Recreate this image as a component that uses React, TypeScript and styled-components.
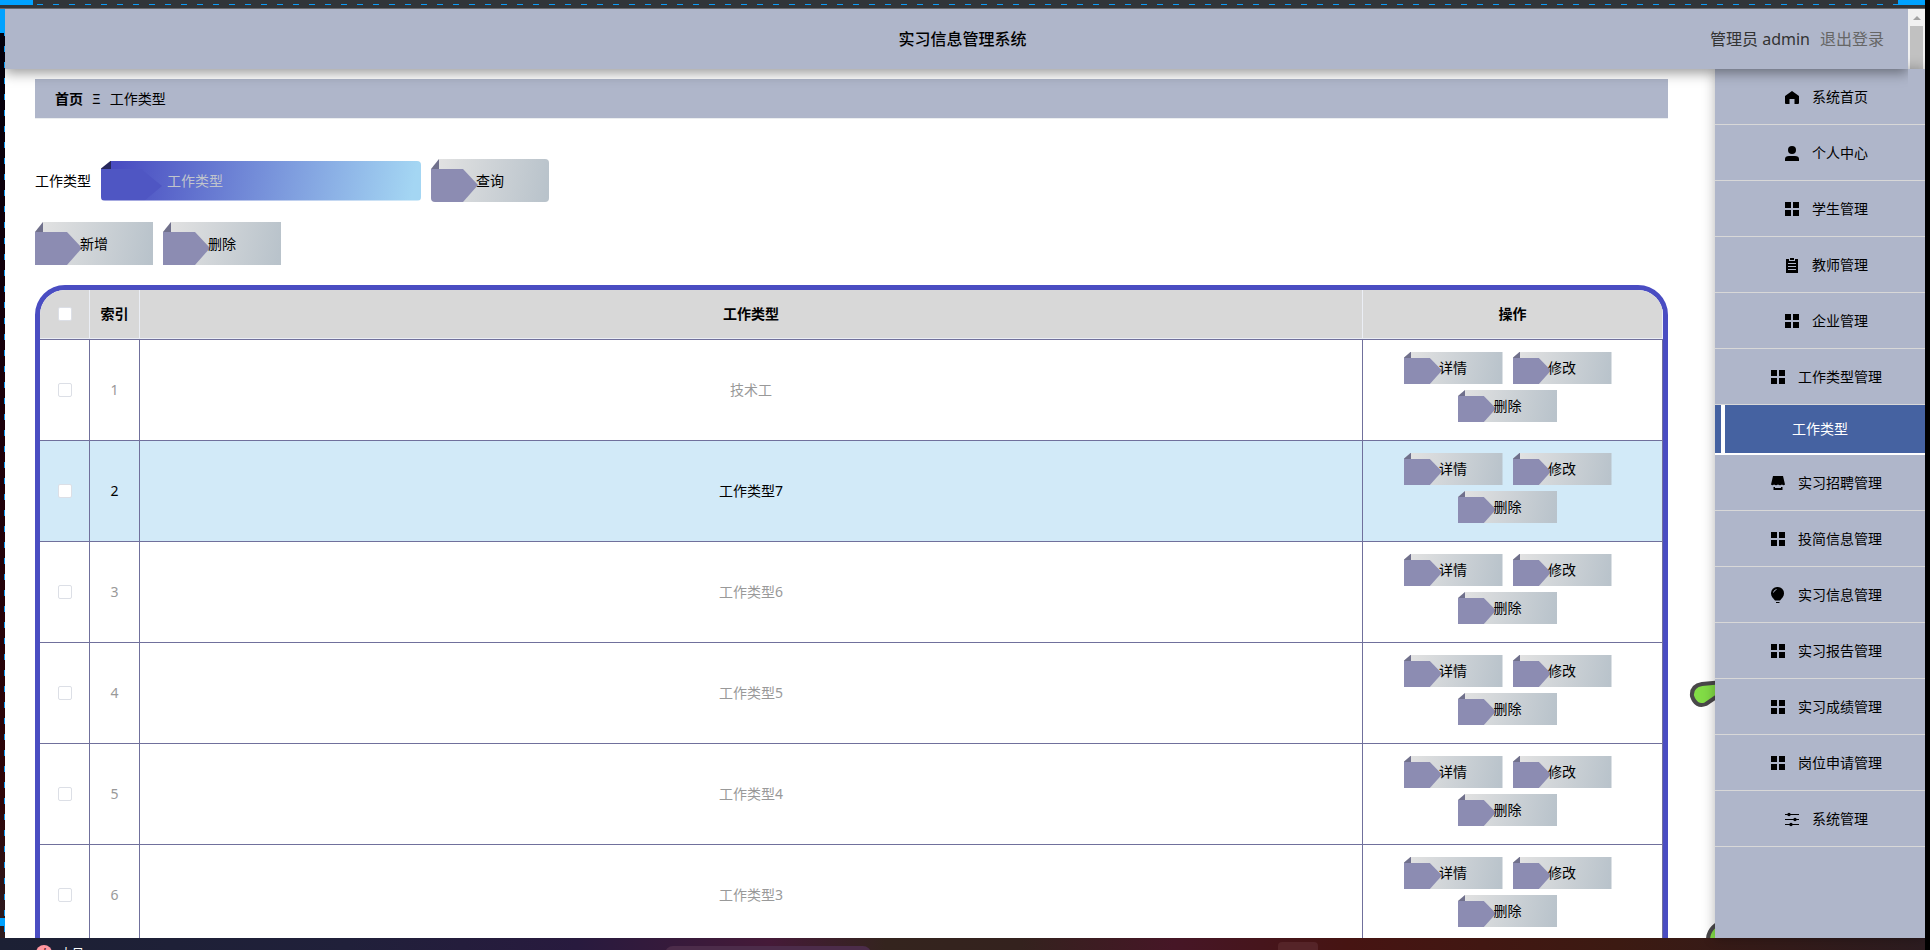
import React from "react";
import styled, { createGlobalStyle } from "styled-components";

const GlobalStyle = createGlobalStyle`
  * { box-sizing: border-box; }
  html, body, #root { height: 100%; }
  body {
    margin: 0;
    overflow: hidden;
    background: #000;
    color: #000;
    font: 14px/20px "Noto Sans", "Noto Sans CJK SC", sans-serif;
  }
  button, input { font: inherit; }
`;

const Desktop = styled.div`
  height: 100vh;
  display: grid;
  grid-template-columns: 5px minmax(0, 1fr) 5px;
  grid-template-rows: 9px minmax(0, 1fr) 12px;
`;

const TopEdge = styled.div`
  grid-column: 1 / 3;
  display: flex;
  justify-content: space-between;
  border-bottom: 1px solid #66676b;
  background:
    repeating-linear-gradient(90deg, transparent 0 5px, #0c9bf5 5px 11px, transparent 11px 16px) 0 4px / 100% 1px no-repeat,
    #313539;
`;

const Corner = styled.i<{ $width: number; $height: number }>`
  width: ${(p) => p.$width}px;
  height: ${(p) => p.$height}px;
  background: #00a2ff;
`;

const RightEdge = styled.div`
  grid-column: 3;
  grid-row: 1 / 4;
  background: #000;
`;

const LeftEdge = styled.div`
  grid-column: 1;
  grid-row: 2;
  display: flex;
  flex-direction: column;
  justify-content: space-between;
  padding-bottom: 12px;
  background:
    repeating-linear-gradient(180deg, transparent 0 5px, #0c9bf5 5px 11px, transparent 11px 16px) 4px 0 / 1px 100% no-repeat,
    linear-gradient(#00000c, #1c000a 45%, #2e0508 85%, #2c1c20);
`;

const Taskbar = styled.footer`
  grid-column: 1 / 3;
  grid-row: 3;
  display: flex;
  align-items: flex-start;
  overflow: hidden;
  background: linear-gradient(90deg, #1c2034, #20203a 18%, #281a3e 30%, #451a38 40%, #34241e 46%, #34221e 53%, #461626 61%, #461412 70%, #3c1a12 84%, #2c1c20);
`;

const Weather = styled.span`
  display: flex;
  gap: 8px;
  padding: 7px 0 0 36px;
  flex: 0 0 665px;
  color: #fff;
  font-size: 12px;
  line-height: 18px;
`;

const Alert = styled.i`
  width: 16px;
  height: 16px;
  border-radius: 50%;
  background: #ff96a0;
  color: #55202c;
  text-align: center;
  line-height: 16px;
`;

const SearchPill = styled.i`
  flex: 0 0 206px;
  height: 30px;
  margin-top: 8px;
  border-radius: 8px;
  background: #4c2c4a;
`;

const TaskButton = styled.i`
  flex: 0 0 40px;
  height: 30px;
  margin: 4px 0 0 407px;
  border-radius: 4px;
  background: #552428;
`;

const Screen = styled.div`
  grid-column: 2;
  grid-row: 2;
  position: relative;
  display: grid;
  grid-template-columns: minmax(0, 1fr) 193px 17px;
  grid-template-rows: 60px minmax(0, 1fr);
  background: #fff;
`;

const Header = styled.header`
  grid-column: 1 / 3;
  z-index: 2;
  display: grid;
  grid-template-columns: 1fr auto 1fr;
  align-items: center;
  padding: 0 24px 0 36px;
  background: #afb6ca;
  box-shadow: 0 4px 12px rgba(0, 0, 0, 0.4);
  clip-path: inset(0 0 -24px 0);
`;

const Title = styled.h1`
  grid-column: 2;
  margin: 0;
  font-size: 16px;
  line-height: 24px;
  font-weight: 500;
`;

const Account = styled.div`
  display: flex;
  justify-content: flex-end;
  gap: 10px;
  font-size: 16px;
  line-height: 24px;
  color: #333;
`;

const Logout = styled.a`
  color: #666;
  text-decoration: none;
`;

const Scrollbar = styled.div`
  display: flex;
  flex-direction: column;
  align-items: center;
  padding-top: 7px;
  background: #f1f1f1;
  &::before {
    content: "";
    border: 4px solid transparent;
    border-top: 0;
    border-bottom: 4px solid #a3a3a3;
  }
`;

const Thumb = styled.i`
  flex: 1;
  width: 13px;
  margin-top: 6px;
  background: #c1c1c1;
`;

const Main = styled.main`
  min-width: 0;
  overflow: hidden;
  padding: 10px 47px 0 30px;
`;

const Breadcrumb = styled.nav`
  display: flex;
  align-items: center;
  gap: 9px;
  height: 40px;
  padding: 0 20px;
  border-bottom: 1px solid #ebeef0;
  background: #afb6ca;
  a {
    color: #000;
    font-weight: 700;
    text-decoration: none;
  }
`;

const Toolbar = styled.div<{ $top: number }>`
  display: flex;
  align-items: center;
  gap: 10px;
  margin-top: ${(p) => p.$top}px;
`;

const SearchField = styled.input`
  width: 320px;
  height: 40px;
  padding: 0 10px 0 66px;
  border: 0;
  border-radius: 4px;
  color: #fff;
  clip-path: polygon(10px 0, 100% 0, 100% 100%, 0 100%, 0 8px);
  background:
    linear-gradient(#26275c 0 0) 0 0 / 10px 8px no-repeat,
    url("data:image/svg+xml,%3Csvg xmlns='http://www.w3.org/2000/svg' viewBox='0 0 61 40'%3E%3Cpath d='M0 8H40L61 25L43 40H0Z' fill='%234f56c3'/%3E%3C/svg%3E") 0 0 / 61px 40px no-repeat,
    linear-gradient(100deg, #494cc1 5%, #a4d6f3 97%);
  &::placeholder { color: #c0c4cc; opacity: 1; }
`;

const TagButton = styled.button<{ $small?: boolean; $round?: boolean }>`
  --fold-x: ${(p) => (p.$small ? 7 : 8)}px;
  --fold-y: ${(p) => (p.$small ? 6 : 10)}px;
  width: ${(p) => (p.$small ? 99 : 118)}px;
  height: ${(p) => (p.$small ? 32 : 43)}px;
  padding: 0;
  border: 0;
  border-radius: ${(p) => (p.$round ? 4 : 0)}px;
  color: #000;
  cursor: pointer;
  clip-path: polygon(var(--fold-x) 0, 100% 0, 100% 100%, 0 100%, 0 var(--fold-y));
  background:
    linear-gradient(#70708c 0 0) 0 0 / var(--fold-x) var(--fold-y) no-repeat,
    url("data:image/svg+xml,%3Csvg xmlns='http://www.w3.org/2000/svg' viewBox='0 0 47 33' preserveAspectRatio='none'%3E%3Cpath d='M0 0H32L47 16L32 33H0Z' fill='%238c8cb2'/%3E%3C/svg%3E") 0 100% / ${(p) => (p.$small ? "38px 26px" : "47px 33px")} no-repeat,
    linear-gradient(100deg, #e2e2e2 5%, #b9c3cb 97%);
`;

const TableFrame = styled.div`
  margin-top: 20px;
  border: 5px solid #4a4dc2;
  border-radius: 30px;
  overflow: hidden;
`;

const Table = styled.table`
  width: 100%;
  table-layout: fixed;
  border-collapse: separate;
  border-spacing: 0;
  text-align: center;
  th, td {
    padding: 0;
    border-right: 1px solid #70709c;
    border-bottom: 1px solid #70709c;
  }
  th {
    height: 49px;
    background: #d8d8d8;
    border-color: #ebeef5;
    font-weight: 700;
  }
  tbody tr:first-child { height: 102px; }
  tbody tr:first-child td { border-top: 1px solid #70709c; }
`;

const Row = styled.tr<{ $active: boolean }>`
  height: 101px;
  color: ${(p) => (p.$active ? "#000" : "#999")};
  background: ${(p) => (p.$active ? "#d2eaf8" : "#fff")};
`;

const Check = styled.input`
  appearance: none;
  display: block;
  width: 14px;
  height: 14px;
  margin: 0 auto;
  border: 1px solid #dcdfe6;
  border-radius: 2px;
  background: #fff;
`;

const Actions = styled.div`
  display: flex;
  flex-wrap: wrap;
  justify-content: center;
  button { margin: 0 10px 6px 0; }
`;

const Sidebar = styled.aside`
  grid-column: 2 / 4;
  background: #afb6ca;
  box-shadow: 0 0 12px rgba(0, 0, 0, 0.3);
  z-index: 1;
`;

const MenuItem = styled.a`
  display: flex;
  align-items: center;
  justify-content: center;
  gap: 8px;
  height: 56px;
  padding-left: 8px;
  border-bottom: 1px solid #d8d8d8;
  color: #000;
  text-decoration: none;
  svg { margin: 0 5px; }
`;

const SubItem = styled.a`
  display: flex;
  height: 50px;
  align-items: center;
  justify-content: center;
  border-bottom: 2px solid #fff;
  color: #fff;
  text-decoration: none;
  background: linear-gradient(#fff 0 0) 6px 0 / 4px 100% no-repeat, #4562a1;
`;

const Mascot = styled.svg`
  position: absolute;
  right: 207px;
  bottom: 0;
  width: 30px;
  height: 260px;
`;

const shapes: Record<string, React.ReactNode> = {
  home: <path d="M7 1L0 6V13Q0 14 1 14H4.500V9H9.500V14H13Q14 14 14 13V6Z" />,
  user: (
    <>
      <circle cx="7" cy="4" r="4" />
      <path d="M0 15V13Q0 10 4 10H10Q14 10 14 13V15Z" />
    </>
  ),
  grid: <path d="M0 0H6V6H0ZM8 0H14V6H8ZM0 8H6V14H0ZM8 8H14V14H8Z" />,
  clipboard: <path fillRule="evenodd" d="M1 1H4V3H10V1H13V15H1ZM3 5V6H11V5ZM3 8V9H11V8ZM3 11V12H11V11ZM5 0H9V2H5Z" />,
  shop: <path d="M2 0H12L14 8.500Q12.500 10 11 8.500Q9 10 7 8.500Q5 10 3 8.500Q1.500 10 0 8.500ZM2.500 11H4V12H10V11H11.500V14H2.500Z" />,
  bulb: (
    <>
      <path d="M6.500 -1A6.300 6.300 0 0 1 13 5.500C13 8.500 11 10 9 12.500H4C2 10 0 8.500 0 5.500A6.300 6.300 0 0 1 6.500 -1Z" />
      <path d="M5 14.500H8.500" stroke="#000" />
      <path d="M2.500 4.500Q3 2 5.500 1.500" fill="none" stroke="#afb6ca" />
    </>
  ),
  sliders: (
    <>
      <path d="M0 2.500H14M0 7.500H14M0 12.500H14" stroke="#000" />
      <circle cx="4" cy="2.500" r="1.700" />
      <circle cx="10" cy="7.500" r="1.700" />
      <circle cx="6" cy="12.500" r="1.700" />
    </>
  ),
};

const Icon = ({ name }: { name: string }) => (
  <svg width="14" height="16" viewBox="0 -1 14 16" aria-hidden="true">
    {shapes[name]}
  </svg>
);

const menuTop = [
  ["home", "系统首页"],
  ["user", "个人中心"],
  ["grid", "学生管理"],
  ["clipboard", "教师管理"],
  ["grid", "企业管理"],
  ["grid", "工作类型管理"],
];

const menuBottom = [
  ["shop", "实习招聘管理"],
  ["grid", "投简信息管理"],
  ["bulb", "实习信息管理"],
  ["grid", "实习报告管理"],
  ["grid", "实习成绩管理"],
  ["grid", "岗位申请管理"],
  ["sliders", "系统管理"],
];

const rows = ["技术工", "工作类型7", "工作类型6", "工作类型5", "工作类型4", "工作类型3"];

/* Empty space under the last visible row, so the frame runs on below the fold. */
const TableTail = styled.div`
  height: 100px;
`;

const Menu = ({ items }: { items: string[][] }) => (
  <>
    {items.map(([icon, label]) => (
      <MenuItem href="#" key={label}>
        <Icon name={icon} />
        {label}
      </MenuItem>
    ))}
  </>
);

export default function App() {
  return (
    <>
      <GlobalStyle />
      <Desktop>
        <TopEdge>
          <Corner $width={33} $height={5} />
          <Corner $width={27} $height={5} />
        </TopEdge>
        <RightEdge />
        <LeftEdge>
          <Corner $width={5} $height={24} />
          <Corner $width={5} $height={8} />
        </LeftEdge>
        <Screen>
          <Header>
            <Title>实习信息管理系统</Title>
            <Account>
              <span>管理员 admin</span>
              <Logout href="#">退出登录</Logout>
            </Account>
          </Header>
          <Scrollbar>
            <Thumb />
          </Scrollbar>
          <Main>
            <Breadcrumb>
              <a href="#">首页</a>
              <span>Ξ</span>
              <span>工作类型</span>
            </Breadcrumb>
            <Toolbar $top={40}>
              <label htmlFor="type">工作类型</label>
              <SearchField id="type" placeholder="工作类型" />
              <TagButton $round>查询</TagButton>
            </Toolbar>
            <Toolbar $top={20}>
              <TagButton>新增</TagButton>
              <TagButton>删除</TagButton>
            </Toolbar>
            <TableFrame>
              <Table>
                <colgroup>
                  <col width="50" />
                  <col width="50" />
                  <col />
                  <col width="300" />
                </colgroup>
                <thead>
                  <tr>
                    <th>
                      <Check type="checkbox" aria-label="全选" />
                    </th>
                    <th>索引</th>
                    <th>工作类型</th>
                    <th>操作</th>
                  </tr>
                </thead>
                <tbody>
                  {rows.map((name, i) => (
                    <Row key={name} $active={i === 1}>
                      <td>
                        <Check type="checkbox" aria-label={name} />
                      </td>
                      <td>{i + 1}</td>
                      <td>{name}</td>
                      <td>
                        <Actions>
                          <TagButton $small>详情</TagButton>
                          <TagButton $small>修改</TagButton>
                          <TagButton $small>删除</TagButton>
                        </Actions>
                      </td>
                    </Row>
                  ))}
                </tbody>
              </Table>
              <TableTail />
            </TableFrame>
          </Main>
          <Sidebar>
            <Menu items={menuTop} />
            <SubItem href="#">工作类型</SubItem>
            <Menu items={menuBottom} />
          </Sidebar>
          <Mascot viewBox="0 0 30 260" fill="#82dc46" stroke="#4a484a" strokeWidth="4" aria-hidden="true">
            <path d="M34 4L14 6Q3 8 4 18Q8 30 18 26L34 15Z" />
            <circle cx="38" cy="262" r="18" />
          </Mascot>
        </Screen>
        <Taskbar>
          <Weather>
            <Alert>!</Alert>
            <span>大风</span>
          </Weather>
          <SearchPill />
          <TaskButton />
        </Taskbar>
      </Desktop>
    </>
  );
}
